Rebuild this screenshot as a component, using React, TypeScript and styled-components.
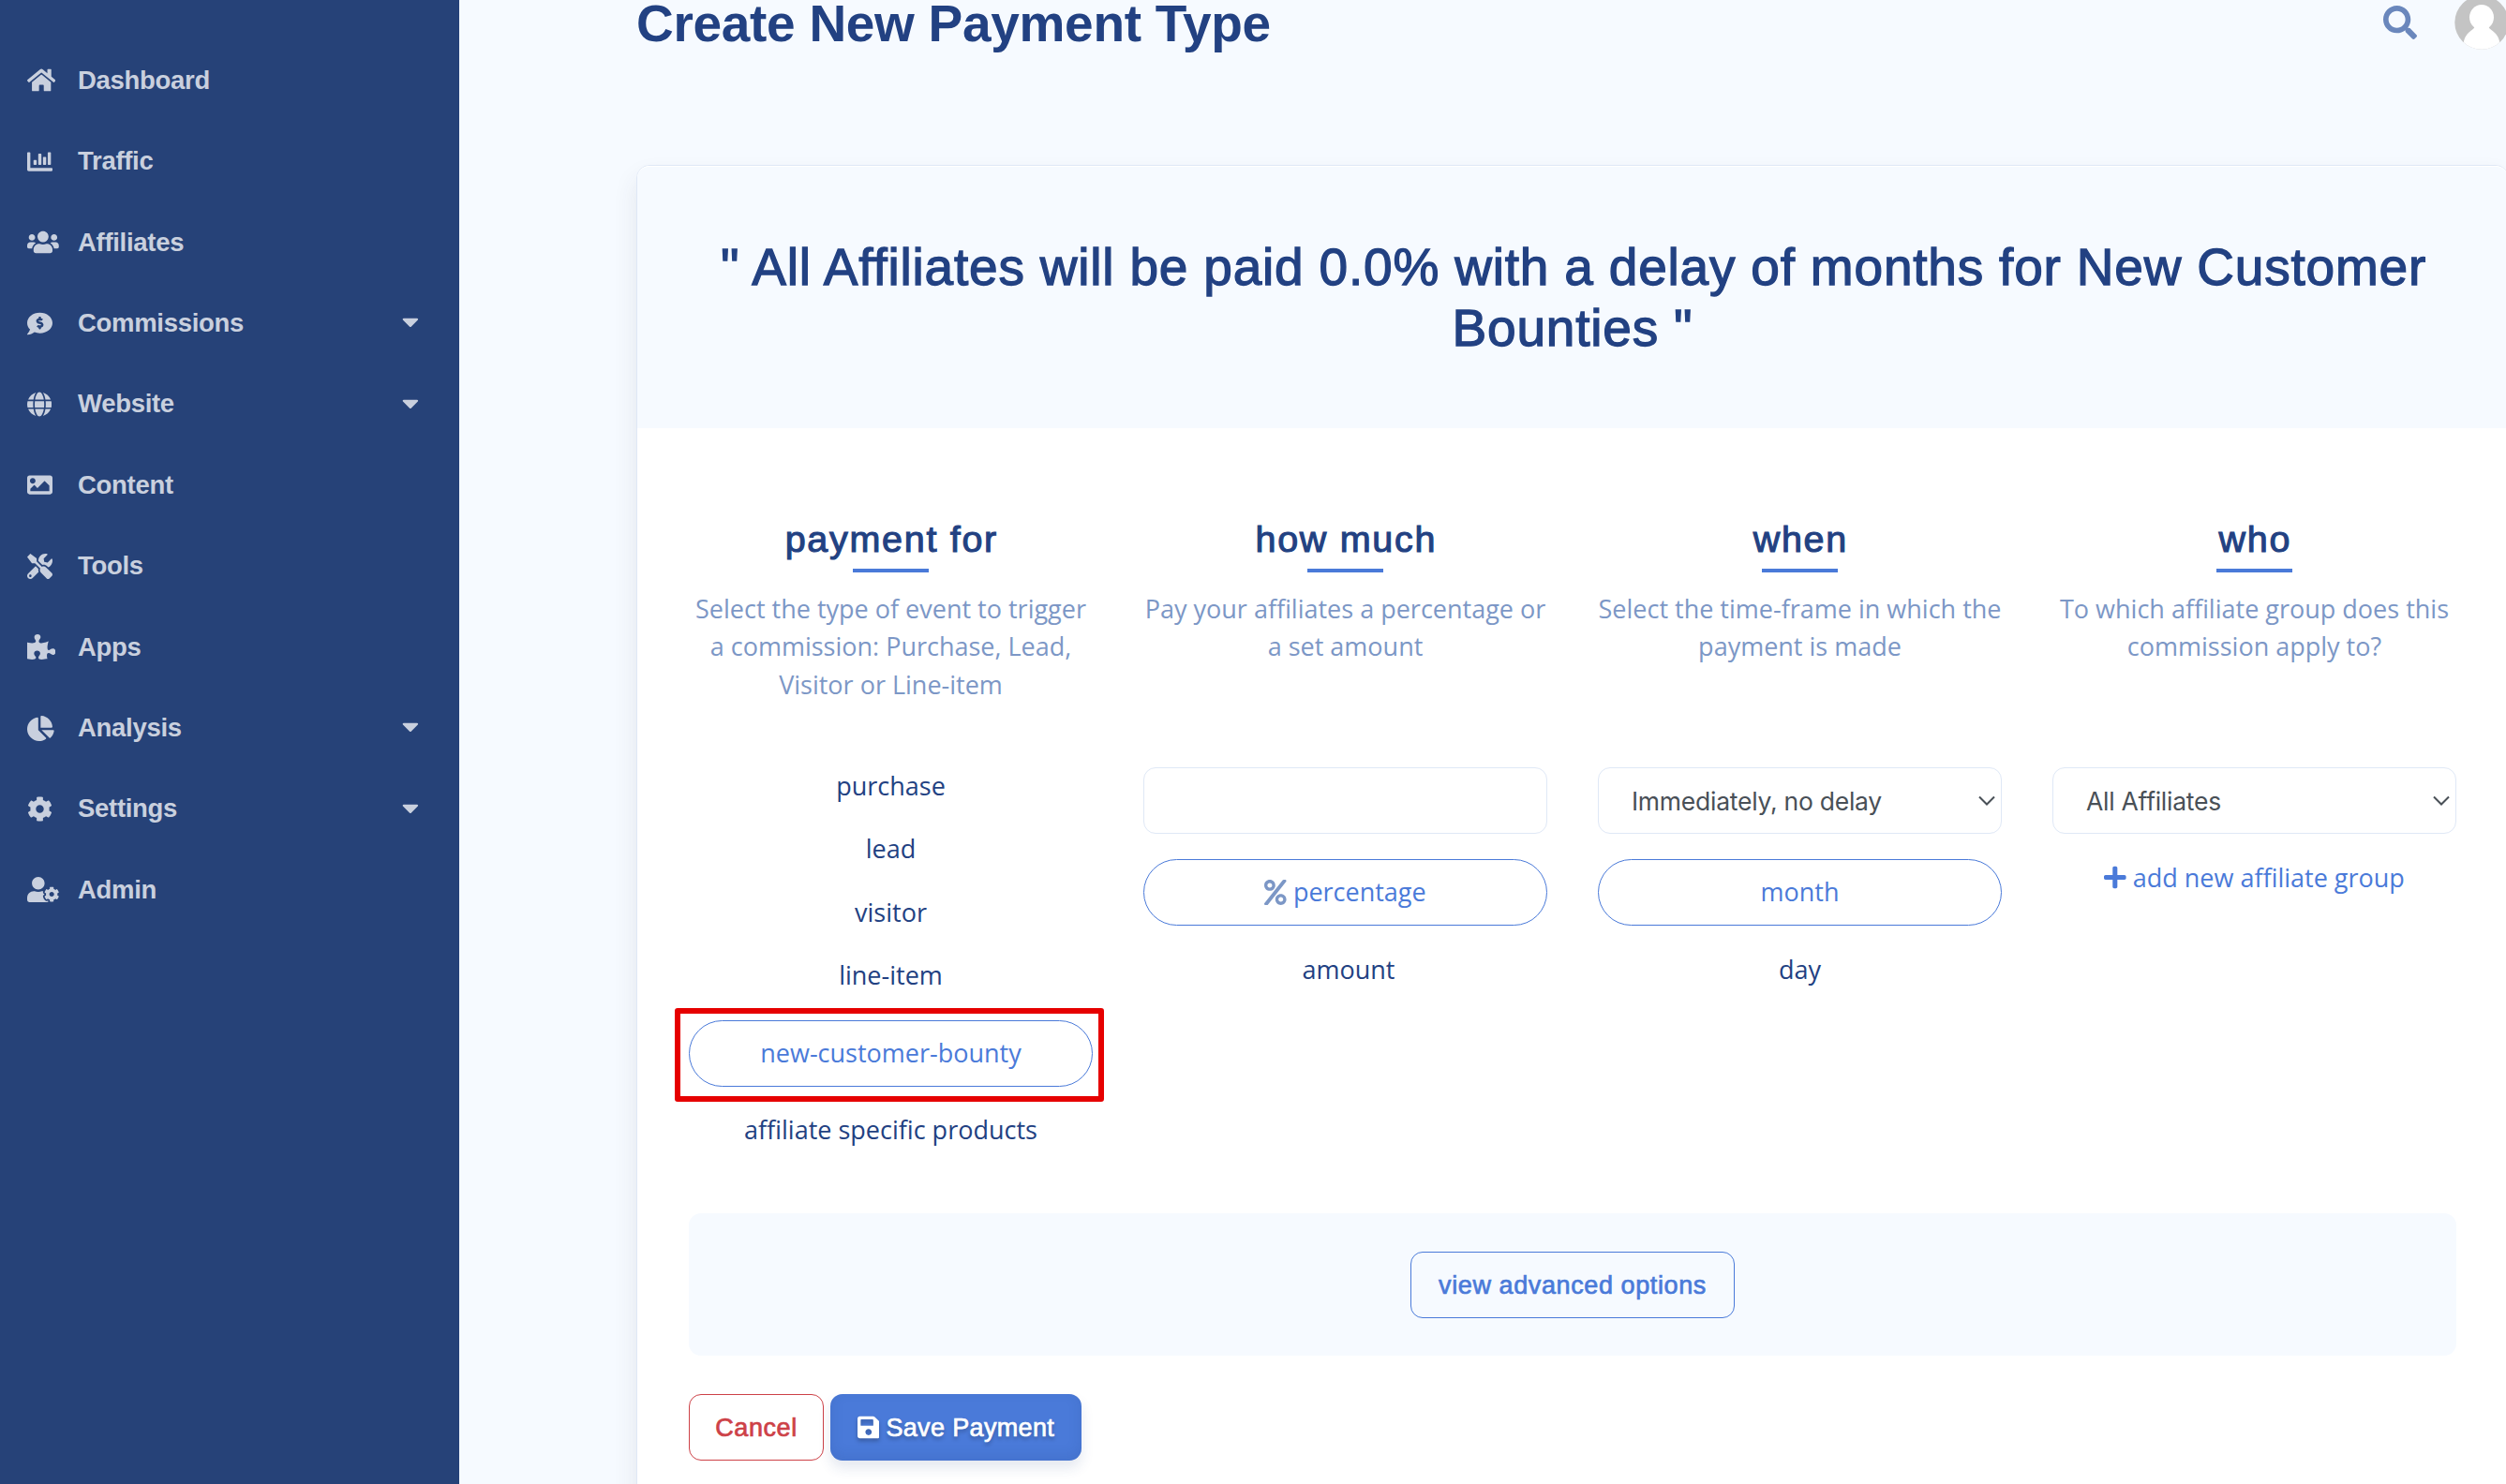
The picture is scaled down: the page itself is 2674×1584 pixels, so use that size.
import React from 'react';
import styled, { createGlobalStyle, css } from 'styled-components';
import {
  FaHome,
  FaChartBar,
  FaUsers,
  FaCommentDollar,
  FaGlobe,
  FaImage,
  FaTools,
  FaPuzzlePiece,
  FaChartPie,
  FaCog,
  FaUserCog,
  FaCaretDown,
  FaSearch,
  FaPercent,
  FaPlus,
  FaSave,
} from 'react-icons/fa';

const navy = '#224182';
const blue = '#4a7ad9';
const pale = '#f6faff';
const line = '#dfe8f6';
const heading = `"Liberation Sans", Arial, sans-serif`;

const GlobalStyle = createGlobalStyle`
  * {
    box-sizing: border-box;
  }
  body {
    margin: 0;
    overflow: hidden;
    background: ${pale};
    font-family: "Open Sans", sans-serif;
    font-size: 27px;
    line-height: 40.4px;
    color: ${navy};
  }
`;

const Page = styled.div`
  display: flex;
  height: 1584px;
  overflow: hidden;
`;

const Sidebar = styled.nav`
  flex: none;
  width: 490px;
  padding-top: 42.3px;
  background: #264278;
`;

const NavItem = styled.a`
  display: flex;
  align-items: center;
  height: 86.4px;
  padding: 1px 43px 0 29px;
  font-family: ${heading};
  font-size: 27.5px;
  font-weight: 700;
  letter-spacing: -0.3px;
  color: #c9d0de;
`;

const NavIcon = styled.span<{ $width: number }>`
  display: flex;
  width: 54px;

  svg {
    width: ${(p) => p.$width}px;
    height: 27px;
  }
`;

const Caret = styled(FaCaretDown)`
  width: 17.8px;
  height: 28.5px;
  margin: 0 0 3px auto;
`;

const Main = styled.main`
  flex: none;
  width: 1998px;
  margin-left: 189px;
`;

const TopBar = styled.header`
  display: flex;
  align-items: center;
  height: 58px;
  margin-top: -5px;
  margin-bottom: 123px;
`;

const PageTitle = styled.h1`
  margin: 0 auto 0 0;
  padding-top: 1px;
  font-family: ${heading};
  font-size: 55px;
  font-weight: 700;
  line-height: 48px;
  letter-spacing: -0.3px;
`;

const SearchIcon = styled(FaSearch)`
  width: 36px;
  height: 36px;
  margin-right: 40px;
  color: #6a87bc;
`;

const Card = styled.section`
  height: 1600px;
  background: #fff;
  border: 1px solid ${line};
  border-radius: 14px;
  box-shadow: 0 14px 26px rgba(56, 62, 80, 0.1);
`;

const Summary = styled.div`
  padding: 75px 80px 74px;
  background: ${pale};
  border-top: 1px solid #fff;
  border-radius: 13px 13px 0 0;
`;

const SummaryText = styled.h2`
  margin: 0;
  font-family: ${heading};
  font-size: 55px;
  font-weight: 400;
  line-height: 65px;
  letter-spacing: 0.8px;
  text-indent: 2px;
  text-align: center;
  -webkit-text-stroke: 1.3px ${navy};
`;

const CardBody = styled.div`
  padding: 94px 55px;
`;

const Columns = styled.div`
  display: grid;
  grid-template-columns: repeat(4, 431px);
  column-gap: 54px;
`;

const Column = styled.div`
  display: flex;
  flex-direction: column;
  text-align: center;
`;

const ColumnTitle = styled.h3`
  margin: 0;
  font-family: ${heading};
  font-size: 39.5px;
  font-weight: 400;
  line-height: 48px;
  letter-spacing: 1.7px;
  text-indent: 1.7px;
  -webkit-text-stroke: 1.1px ${navy};

  &::after {
    content: '';
    display: block;
    width: 81px;
    height: 4px;
    margin: 8px auto 0;
    background: ${blue};
  }
`;

const Description = styled.p`
  height: 121.2px;
  margin: 19px 0 53.5px;
  color: #7c97c6;
`;

const Option = styled.div`
  padding: 14px 0 13px;
`;

const PillOption = styled.div`
  display: flex;
  position: relative;
  align-items: center;
  justify-content: center;
  gap: 7px;
  height: 71px;
  margin: 14.5px 0 12.5px;
  border: 1px solid ${blue};
  border-radius: 36px;
  color: ${blue};

  svg {
    width: 23.6px;
    height: 27px;
    color: #7c97c6;
  }
`;

// marker drawn around the option
const Highlight = styled.span`
  position: absolute;
  inset: -14px -13px -17px -16px;
  border: 6px solid #e60000;
  border-radius: 3px;
`;

const fieldStyle = css`
  height: 71px;
  margin: 14px 0 13px;
  background: #fff;
  border: 1px solid ${line};
  border-radius: 13px;
`;

const Field = styled.div`
  ${fieldStyle}
`;

const Select = styled.div`
  ${fieldStyle}
  display: flex;
  align-items: center;
  justify-content: space-between;
  padding: 2px 6px 0 35px;
  font-family: Inter, sans-serif;
  font-size: 26.5px;
  letter-spacing: -0.25px;
  color: #495057;
`;

const AddLink = styled.a`
  display: flex;
  align-items: center;
  justify-content: center;
  gap: 7px;
  padding: 14px 0 12px;
  color: ${blue};

  svg {
    width: 23.6px;
    height: 27px;
  }
`;

const AdvancedPanel = styled.div`
  display: flex;
  align-items: center;
  justify-content: center;
  height: 152px;
  margin: 55px 0 41px;
  padding-top: 1px;
  background: ${pale};
  border-radius: 13px;
`;

const Button = styled.button<{ $color: string; $filled?: boolean; $width: number }>`
  display: flex;
  align-items: center;
  justify-content: center;
  gap: 7px;
  width: ${(p) => p.$width}px;
  height: 71px;
  padding: 2px 0 0;
  background: none;
  border: 1px solid ${(p) => p.$color};
  border-radius: 13px;
  font-family: ${heading};
  font-size: 27px;
  letter-spacing: 0.6px;
  color: ${(p) => p.$color};
  -webkit-text-stroke: 0.7px currentColor;

  svg {
    width: 23.6px;
    height: 27px;
    margin-bottom: 2px;
    stroke-width: 0;
    filter: drop-shadow(0 3px 2px rgba(0, 0, 0, 0.25));
  }

  ${(p) =>
    p.$filled &&
    css`
      background: ${p.$color};
      border: 0;
      color: #fff;
      letter-spacing: 0.35px;
      text-shadow: 0 3px 4px rgba(0, 0, 0, 0.3);
      box-shadow: 0 8px 14px rgba(34, 65, 130, 0.12), inset 0 -4px 14px rgba(34, 65, 130, 0.15);
    `}
`;

const Actions = styled.div`
  display: flex;
  gap: 7px;
`;

const navItems = [
  { label: 'Dashboard', icon: FaHome, width: 30.4 },
  { label: 'Traffic', icon: FaChartBar, width: 27 },
  { label: 'Affiliates', icon: FaUsers, width: 33.8 },
  { label: 'Commissions', icon: FaCommentDollar, width: 27, menu: true },
  { label: 'Website', icon: FaGlobe, width: 26.2, menu: true },
  { label: 'Content', icon: FaImage, width: 27 },
  { label: 'Tools', icon: FaTools, width: 27 },
  { label: 'Apps', icon: FaPuzzlePiece, width: 30.4 },
  { label: 'Analysis', icon: FaChartPie, width: 28.7, menu: true },
  { label: 'Settings', icon: FaCog, width: 27, menu: true },
  { label: 'Admin', icon: FaUserCog, width: 33.8 },
];

const Chevron = () => (
  <svg width="18" height="12" viewBox="0 0 18 12" fill="none" stroke="#495057" strokeWidth="2">
    <path d="M1 1.5l8 8 8-8" />
  </svg>
);

const Avatar = () => (
  <svg width="58" height="58" viewBox="0 0 58 58">
    <clipPath id="avatar">
      <circle cx="29" cy="29" r="28.7" />
    </clipPath>
    <g clipPath="url(#avatar)">
      <rect width="58" height="58" fill="#c4c4c4" />
      <ellipse cx="29" cy="23.5" rx="13" ry="13.5" fill="#fff" />
      <path d="M22 33c-1 3-4 4-7 7-4 4-6 9-6 18h40c0-9-2-14-6-18-3-3-6-4-7-7z" fill="#fff" />
    </g>
  </svg>
);

export default function App() {
  return (
    <>
      <GlobalStyle />
      <Page>
        <Sidebar>
          {navItems.map(({ label, icon: Icon, width, menu }) => (
            <NavItem key={label}>
              <NavIcon $width={width}>
                <Icon />
              </NavIcon>
              {label}
              {menu && <Caret />}
            </NavItem>
          ))}
        </Sidebar>
        <Main>
          <TopBar>
            <PageTitle>Create New Payment Type</PageTitle>
            <SearchIcon />
            <Avatar />
          </TopBar>
          <Card>
            <Summary>
              <SummaryText>
                " All Affiliates will be paid 0.0% with a delay of months for New Customer
                <br />
                Bounties "
              </SummaryText>
            </Summary>
            <CardBody>
              <Columns>
                <Column>
                  <ColumnTitle>payment for</ColumnTitle>
                  <Description>
                    Select the type of event to trigger
                    <br />a commission: Purchase, Lead,
                    <br />
                    Visitor or Line-item
                  </Description>
                  <Option>purchase</Option>
                  <Option>lead</Option>
                  <Option>visitor</Option>
                  <Option>line-item</Option>
                  <PillOption>
                    new-customer-bounty
                    <Highlight />
                  </PillOption>
                  <Option>affiliate specific products</Option>
                </Column>
                <Column>
                  <ColumnTitle>how much</ColumnTitle>
                  <Description>
                    Pay your affiliates a percentage or
                    <br />a set amount
                  </Description>
                  <Field />
                  <PillOption>
                    <FaPercent />
                    percentage
                  </PillOption>
                  <Option>&nbsp;amount</Option>
                </Column>
                <Column>
                  <ColumnTitle>when</ColumnTitle>
                  <Description>
                    Select the time-frame in which the
                    <br />
                    payment is made
                  </Description>
                  <Select>
                    Immediately, no delay
                    <Chevron />
                  </Select>
                  <PillOption>month</PillOption>
                  <Option>day</Option>
                </Column>
                <Column>
                  <ColumnTitle>who</ColumnTitle>
                  <Description>
                    To which affiliate group does this
                    <br />
                    commission apply to?
                  </Description>
                  <Select>
                    All Affiliates
                    <Chevron />
                  </Select>
                  <AddLink>
                    <FaPlus />
                    add new affiliate group
                  </AddLink>
                </Column>
              </Columns>
              <AdvancedPanel>
                <Button $color={blue} $width={346}>
                  view advanced options
                </Button>
              </AdvancedPanel>
              <Actions>
                <Button $color="#cd4147" $width={144}>
                  Cancel
                </Button>
                <Button $color={blue} $width={268} $filled>
                  <FaSave />
                  Save Payment
                </Button>
              </Actions>
            </CardBody>
          </Card>
        </Main>
      </Page>
    </>
  );
}
